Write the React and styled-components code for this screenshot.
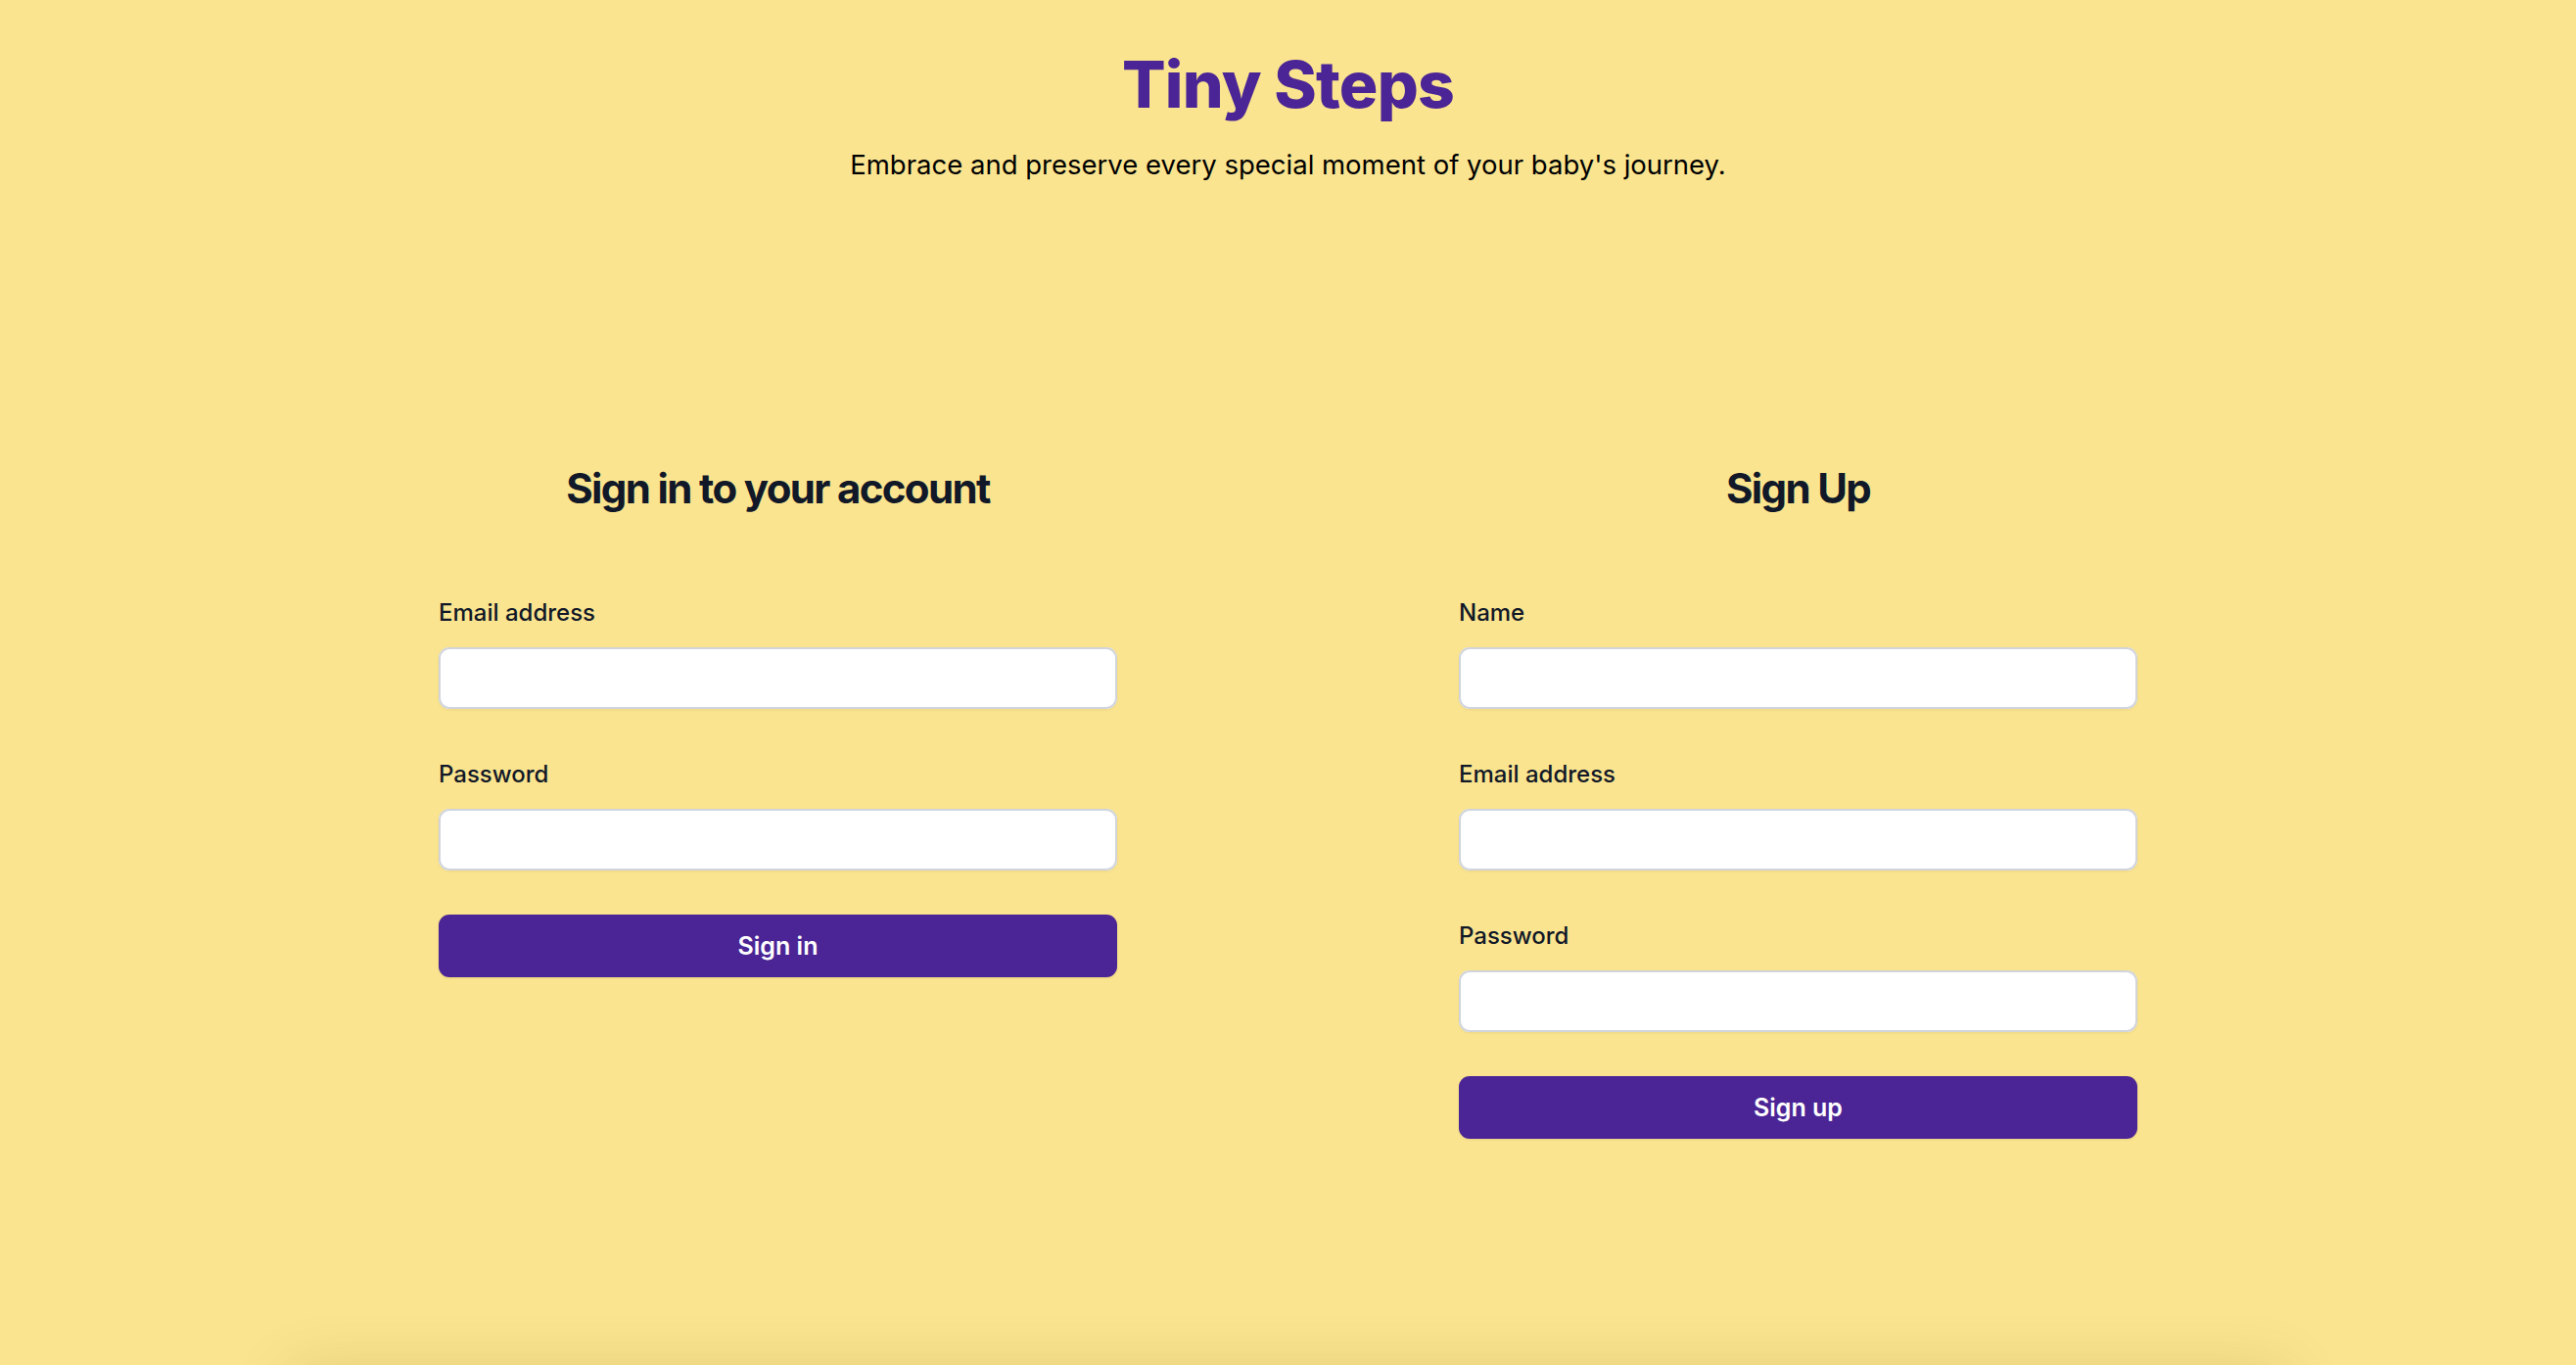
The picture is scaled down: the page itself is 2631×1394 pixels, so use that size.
import React from "react";
import styled, { createGlobalStyle } from "styled-components";

const GlobalStyle = createGlobalStyle`
  body {
    margin: 0;
    background: #fae48f;
    font-family: Inter, "Noto Sans", sans-serif;
    color: #111827;
  }
`;

const Page = styled.div`
  padding-top: 50px;
  display: flex;
  flex-direction: column;
  align-items: center;
`;

const Header = styled.header`
  text-align: center;
`;

const Title = styled.h1`
  margin: 0;
  font-size: 66px;
  line-height: 72px;
  font-weight: 800;
  letter-spacing: -0.8px;
  color: #4b2595;
`;

const Subtitle = styled.p`
  margin: 22px 0 0;
  font-size: 27.5px;
  line-height: 48px;
  color: #000;
`;

const FormsRow = styled.div`
  margin-top: 275px;
  display: flex;
  justify-content: center;
  align-items: flex-start;
  gap: 349px;
`;

const Column = styled.section`
  width: 693px;
`;

const Heading = styled.h2`
  margin: 0;
  text-align: center;
  font-size: 42px;
  line-height: 64px;
  font-weight: 700;
  letter-spacing: -1.65px;
  color: #111827;
`;

const Form = styled.form`
  margin-top: 73px;
  display: flex;
  flex-direction: column;
  gap: 45px;
`;

const Field = styled.div`
  display: flex;
  flex-direction: column;
`;

const Label = styled.label`
  font-size: 24px;
  line-height: 43px;
  font-weight: 500;
  color: #111827;
`;

const Input = styled.input`
  margin-top: 14px;
  box-sizing: border-box;
  width: 100%;
  height: 63px;
  border: 0;
  border-radius: 11px;
  background: #fff;
  box-shadow: inset 0 0 0 2px #d1d5db, 0 1px 3px rgba(0, 0, 0, 0.06);
  outline: none;
  padding: 0 20px;
  font-family: inherit;
  font-size: 25px;
`;

const Button = styled.button`
  height: 64px;
  width: 100%;
  border: 0;
  border-radius: 11px;
  background: #4b2595;
  color: #fff;
  font-family: inherit;
  font-size: 25px;
  font-weight: 600;
  box-shadow: 0 1px 3px rgba(0, 0, 0, 0.08);
  cursor: pointer;
`;

const Below = styled.div`
  margin-top: 237px;
  width: 2040px;
  height: 400px;
  background: #fae48f;
  border-radius: 20px;
  box-shadow: 0 0 60px rgba(120, 90, 0, 0.18);
`;

const fieldsIn = ["Email address", "Password"];
const fieldsUp = ["Name", "Email address", "Password"];

const AuthForm = ({ title, fields, action }) => (
  <Column>
    <Heading>{title}</Heading>
    <Form onSubmit={(e) => e.preventDefault()}>
      {fields.map((f) => (
        <Field key={f}>
          <Label>{f}</Label>
          <Input type={f === "Password" ? "password" : f === "Name" ? "text" : "email"} />
        </Field>
      ))}
      <Button type="submit">{action}</Button>
    </Form>
  </Column>
);

export default function App() {
  return (
    <>
      <GlobalStyle />
      <Page>
        <Header>
          <Title>Tiny Steps</Title>
          <Subtitle>Embrace and preserve every special moment of your baby's journey.</Subtitle>
        </Header>
        <FormsRow>
          <AuthForm title="Sign in to your account" fields={fieldsIn} action="Sign in" />
          <AuthForm title="Sign Up" fields={fieldsUp} action="Sign up" />
        </FormsRow>
        <Below />
      </Page>
    </>
  );
}
